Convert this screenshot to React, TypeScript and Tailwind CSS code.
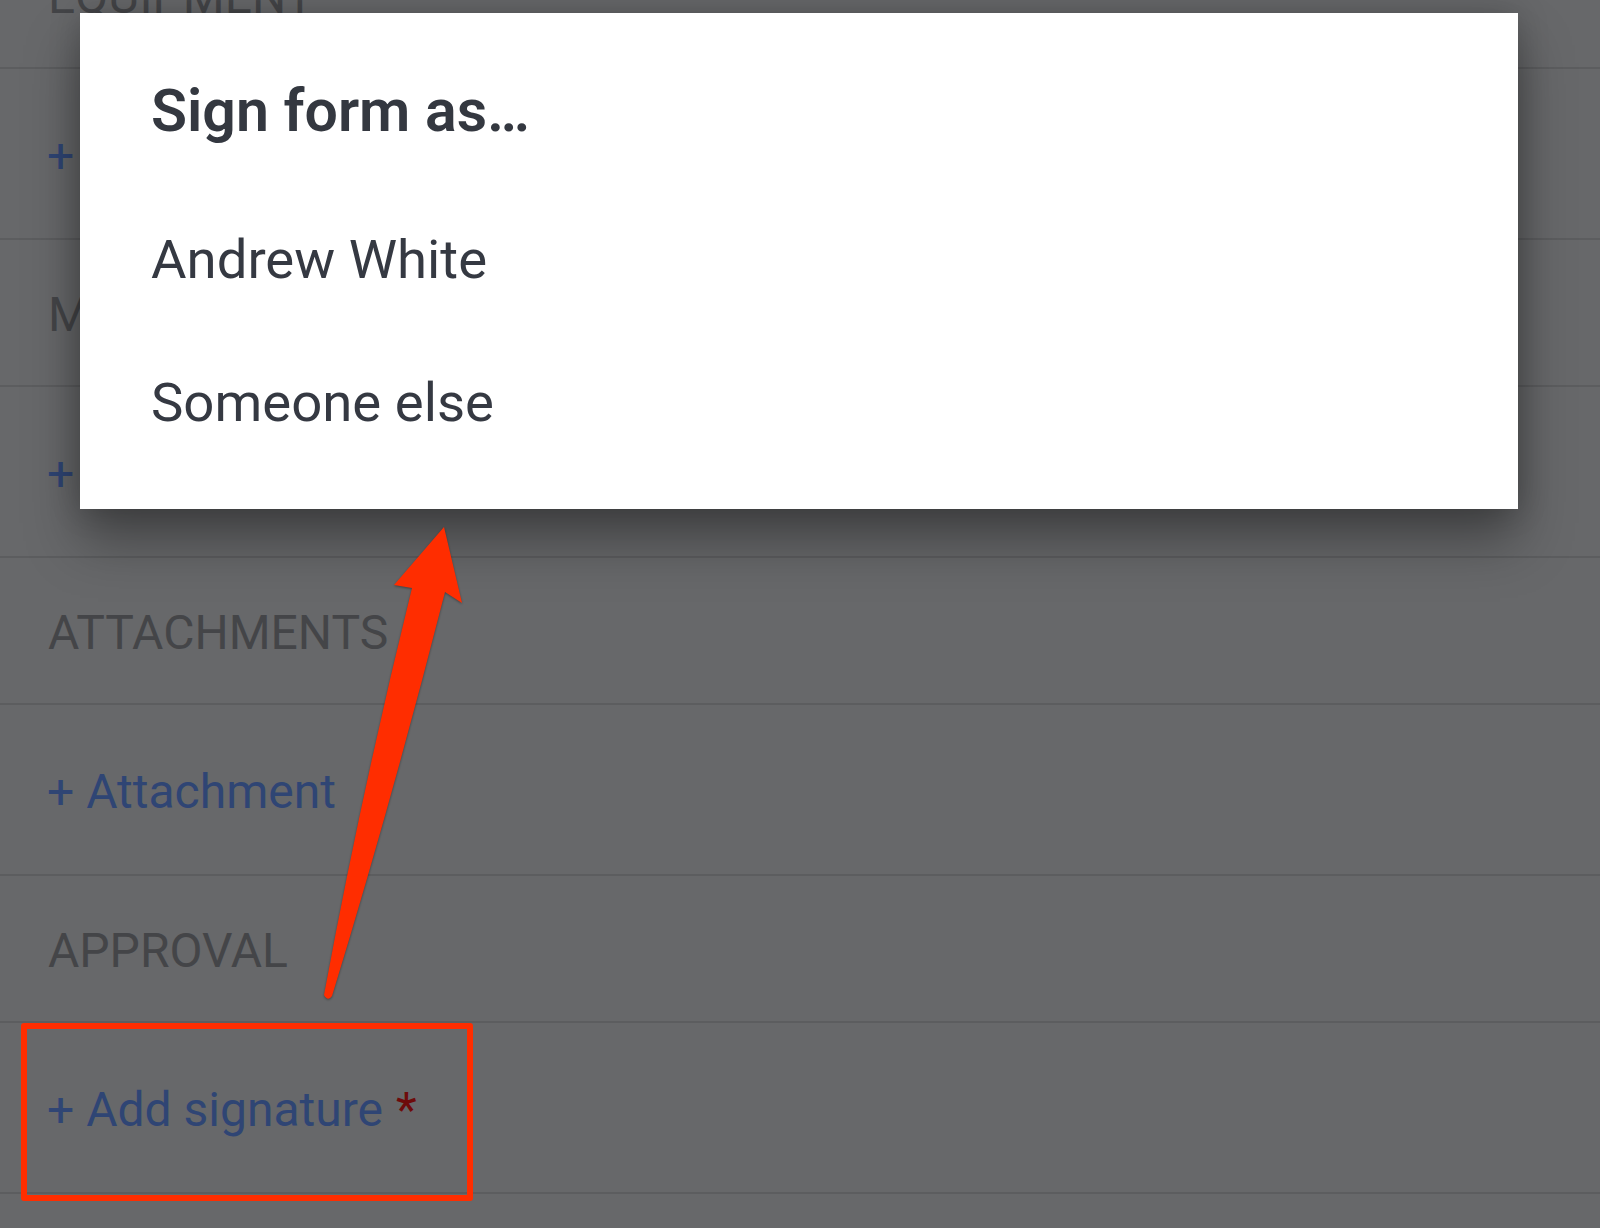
import React from "react";

type Row =
  | { kind: "header"; label: string }
  | { kind: "item"; label: string; required?: boolean };

const rows: Row[] = [
  { kind: "header", label: "EQUIPMENT" },
  { kind: "item", label: "Equipment" },
  { kind: "header", label: "MATERIALS" },
  { kind: "item", label: "Material" },
  { kind: "header", label: "ATTACHMENTS" },
  { kind: "item", label: "Attachment" },
  { kind: "header", label: "APPROVAL" },
  { kind: "item", label: "Add signature", required: true },
];

const options = ["Andrew White", "Someone else"];

const App = () => {
  return (
    <div className="relative w-full h-[1228px] overflow-hidden bg-[#67686a] font-['Roboto',sans-serif]">
      {/* Form behind the dimmed overlay */}
      <div className="-mt-[78px] flex flex-col">
        {rows.map((row, i) =>
          row.kind === "header" ? (
            <div
              key={i}
              className="h-[147px] shrink-0 flex items-center pt-[5px] px-[48px] border-b-2 border-[#5c5d5f] text-[48px] text-[#444548]"
            >
              {row.label}
            </div>
          ) : (
            <div
              key={i}
              className="h-[171px] shrink-0 flex items-center pt-[5px] px-[47px] border-b-2 border-[#5c5d5f] text-[48px] text-[#2f4574]"
            >
              <span>+ {row.label}</span>
              {row.required && <span className="ml-[13px] text-[#6e0b0b]">*</span>}
            </div>
          )
        )}
        <div className="h-[147px] shrink-0" />
      </div>

      {/* Dialog */}
      <div className="absolute left-[80px] top-[13px] w-[1438px] h-[496px] bg-white pt-[58px] pl-[71px] shadow-[0_32px_50px_rgba(0,0,0,0.35),0_0_30px_rgba(0,0,0,0.2)]">
        <h2 className="text-[59px] leading-[80px] font-semibold text-[#343840]">Sign form as…</h2>
        <div className="mt-[37px] flex flex-col">
          {options.map((name) => (
            <div key={name} className="h-[143px] leading-[143px] text-[54.5px] text-[#353942]">
              {name}
            </div>
          ))}
        </div>
      </div>

      {/* Annotation: box around the signature row */}
      <div className="absolute left-[21px] top-[1023px] w-[452px] h-[178px] border-[6px] border-[#ff2d00] rounded-[3px]" />

      {/* Annotation: arrow */}
      <svg
        className="absolute inset-0 pointer-events-none"
        width="1600"
        height="1228"
        viewBox="0 0 1600 1228"
      >
        <path
          d="M444 527 L462 603 L445 592 Q392 800 332 996 Q328 1002 324 995 Q362 790 412 588 L394 585 Z"
          fill="#ff2d00"
          style={{ filter: "drop-shadow(0 1px 1px rgba(0,0,0,0.35))" }}
        />
      </svg>
    </div>
  );
};

export default App;
